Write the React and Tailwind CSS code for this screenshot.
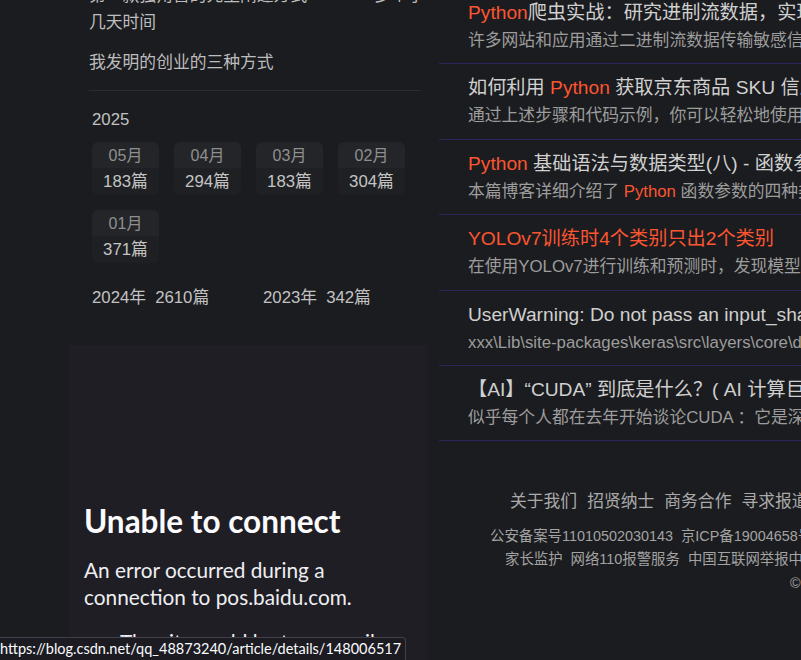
import React from 'react';

const cjk = { fontFamily: '"Liberation Sans", "Noto Sans CJK SC", sans-serif' };
const ff = { fontFamily: 'Lato, "Noto Sans", sans-serif' };

const posts = [
    {
        title: [['Python', 1], ['爬虫实战：研究进制流数据，实现抖音直播弹幕采集', 0]],
        desc: [['许多网站和应用通过二进制流数据传输敏感信息，本文以抖音直播为例进行分析', 0]],
    },
    {
        title: [['如何利用 ', 0], ['Python', 1], [' 获取京东商品 SKU 信息：详细步骤', 0]],
        desc: [['通过上述步骤和代码示例，你可以轻松地使用 Python 获取京东商品信息', 0]],
    },
    {
        title: [['Python', 1], [' 基础语法与数据类型(八) - 函数参数详解', 0]],
        desc: [['本篇博客详细介绍了 ', 0], ['Python', 1], [' 函数参数的四种类型及其用法', 0]],
    },
    {
        title: [['YOLOv7训练时4个类别只出2个类别', 1]],
        desc: [['在使用YOLOv7进行训练和预测时，发现模型只能识别出其中两个类别', 0]],
    },
    {
        title: [['UserWarning: Do not pass an input_shape/input_dim argument', 0]],
        desc: [['xxx\\Lib\\site-packages\\keras\\src\\layers\\core\\dense.py:87: UserWarning', 0]],
    },
    {
        title: [['【AI】“CUDA” 到底是什么？( AI 计算巨头 NVIDIA 的核心技术 )', 0]],
        desc: [['似乎每个人都在去年开始谈论CUDA ：它是深度学习的支柱', 0]],
    },
];

const months = [
    ['05月', '183篇'],
    ['04月', '294篇'],
    ['03月', '183篇'],
    ['02月', '304篇'],
    ['01月', '371篇'],
];

const Seg = ({ parts }) =>
    parts.map(([text, hl], i) => (
        <span key={i} className={hl ? 'text-[#fc5531]' : ''}>{text}</span>
    ));

const Sidebar = () => (
    <div className="w-[359px] shrink-0 ml-[69px] flex flex-col">
        <div className="pl-[20px] pr-[7px] text-[16.8px] leading-[26px] text-[#bdbdbd]" style={cjk}>
            <div className="-mt-[17px] whitespace-nowrap">
                <div>第一款独角兽的先生阐述方式　　　　多个小</div>
                <div className="pt-[1px]">几天时间</div>
            </div>
            <div className="mt-[14px]">我发明的创业的三种方式</div>
            <div className="mt-[14px] border-t border-[#2a2b2f]"></div>
            <div className="mt-[16px] pl-[3px] text-[#c2c2c2]">2025</div>
            <div className="mt-[9px] pl-[3px] grid grid-cols-[repeat(4,82px)] gap-y-[15px]">
                {months.map(([m, n]) => (
                    <div key={m} className="w-[67px] h-[53px] rounded-md overflow-hidden flex flex-col text-center">
                        <div className="h-[26px] leading-[28px] bg-[#242528] text-[16px] text-[#8f8f8f]">{m}</div>
                        <div className="h-[27px] leading-[28px] bg-[#1f2023] text-[#c4c4c4]">{n}</div>
                    </div>
                ))}
            </div>
            <div className="mt-[22px] pl-[3px] flex text-[#c2c2c2]">
                <div className="w-[171px] flex gap-[9px]"><span>2024年</span><span>2610篇</span></div>
                <div className="flex gap-[9px]"><span>2023年</span><span>342篇</span></div>
            </div>
        </div>
        <div className="mt-[34px] h-[400px] bg-[#1f1e25] pl-[15px] pr-4 pt-[157px] text-[#fbfbfe]" style={ff}>
            <h1 className="text-[31.5px] leading-[38px] font-bold">Unable to connect</h1>
            <p className="mt-[16px] text-[20.8px] leading-[27px] text-[#eeeef2]">
                An error occurred during a<br />connection to pos.baidu.com.
            </p>
            <ul className="mt-[18px] pl-[36px] list-disc text-[20.8px] leading-[27px] text-[#eeeef2]">
                <li>The site could be temporarily unavailable or too busy. Try again in a few moments.</li>
            </ul>
        </div>
    </div>
);

const PostList = () => (
    <div className="flex-1 min-w-0 ml-[11px] -mt-[11px] overflow-hidden" style={cjk}>
        {posts.map((p, i) => (
            <div key={i} className="pl-[29px] pt-[11px] pb-[10.4px] border-b border-[#26265a] whitespace-nowrap">
                <div className="text-[19.2px] leading-[26px] text-[#d0d0d0]"><Seg parts={p.title} /></div>
                <div className="mt-[3px] text-[16.8px] leading-6 text-[#9d9d9d]"><Seg parts={p.desc} /></div>
            </div>
        ))}
        <div className="mt-[48.6px] whitespace-nowrap">
            <div className="pl-[71px] flex gap-[10px] text-[16.8px] leading-6 text-[#aaaaaa]">
                <span>关于我们</span><span>招贤纳士</span><span>商务合作</span><span>寻求报道</span><span>400-660-0108</span>
            </div>
            <div className="mt-[11px] text-[14.4px] leading-[23.5px] text-[#a3a3a3]">
                <div className="pl-[51px] flex gap-2">
                    <span>公安备案号11010502030143</span><span>京ICP备19004658号</span><span>京网文〔2020〕1039-165号</span>
                </div>
                <div className="pl-[66px] flex gap-2">
                    <span>家长监护</span><span>网络110报警服务</span><span>中国互联网举报中心</span>
                </div>
                <div className="pl-[351px]">©1999-2025北京创新乐知网络技术有限公司</div>
            </div>
        </div>
    </div>
);

export default function App() {
    return (
        <div className="relative w-[801px] h-[660px] overflow-hidden bg-[#1b1c1f] flex">
            <Sidebar />
            <PostList />
            <div
                className="absolute left-0 bottom-0 h-[23px] pr-[4px] bg-[#1c1b22] border-t border-r border-[#42414b] rounded-tr-[4px] text-[14.5px] leading-[22px] text-[#fbfbfe]"
                style={ff}
            >
                https://blog.csdn.net/qq_48873240/article/details/148006517
            </div>
        </div>
    );
}
